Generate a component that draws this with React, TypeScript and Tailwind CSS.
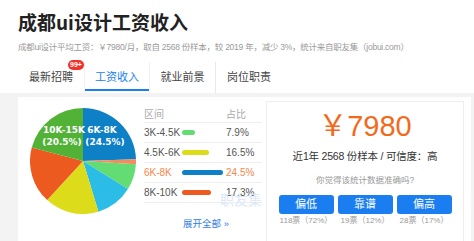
import React from 'react';

const slices = [
  { v: 24.5, c: '#0d80c6' },
  { v: 1.5, c: '#f58a5c' },
  { v: 7.9, c: '#63dc74' },
  { v: 11.4, c: '#2bbde6' },
  { v: 16.5, c: '#dcdc1a' },
  { v: 17.3, c: '#ec5a1f' },
  { v: 20.9, c: '#52b236' },
];

const rows = [
  { range: '3K-4.5K', pct: '7.9%', w: 13, c: 'bg-[#63dc74]', hot: false },
  { range: '4.5K-6K', pct: '16.5%', w: 27, c: 'bg-[#dcdc1a]', hot: false },
  { range: '6K-8K', pct: '24.5%', w: 41, c: 'bg-[#0d80c6]', hot: true },
  { range: '8K-10K', pct: '17.3%', w: 29, c: 'bg-[#ec5a1f]', hot: false },
];

const votes = [
  { label: '偏低', count: '118票（72%）' },
  { label: '靠谱', count: '19票（12%）' },
  { label: '偏高', count: '28票（17%）' },
];

const tabs = ['最新招聘', '工资收入', '就业前景', '岗位职责'];

const Pie: React.FC = () => {
  const cx = 53;
  const cy = 53;
  const r = 53;
  let acc = 0;
  const pt = (p: number) => {
    const a = (p / 100) * Math.PI * 2;
    return [cx + r * Math.sin(a), cy - r * Math.cos(a)];
  };
  return (
    <svg width="106" height="106" viewBox="0 0 106 106" className="shrink-0">
      {slices.map((s, i) => {
        const [x1, y1] = pt(acc);
        acc += s.v;
        const [x2, y2] = pt(acc);
        const large = s.v > 50 ? 1 : 0;
        return (
          <path
            key={i}
            d={`M${cx} ${cy} L${x1} ${y1} A${r} ${r} 0 ${large} 1 ${x2} ${y2} Z`}
            fill={s.c}
          />
        );
      })}
      <g fill="#fff" fontFamily="'DejaVu Sans', sans-serif" fontWeight="bold" fontSize="9" textAnchor="middle">
        <text x="34" y="25">10K-15K</text>
        <text x="32" y="37">(20.5%)</text>
        <text x="72" y="25">6K-8K</text>
        <text x="75" y="37">(24.5%)</text>
      </g>
    </svg>
  );
};

const App: React.FC = () => {
  return (
    <div className="w-[474px] h-[241px] overflow-hidden bg-white font-['Liberation_Sans','Noto_Sans_CJK_SC',sans-serif]">
      {/* header */}
      <div className="px-[18px] pt-[8px]">
        <h1 className="text-[19px] leading-[28px] font-bold text-[#222] font-['Noto_Sans_CJK_SC',sans-serif]">
          成都ui设计工资收入
        </h1>
        <p className="mt-[4px] text-[8.5px] leading-[14px] tracking-[-0.25px] text-[#9a9a9a] whitespace-nowrap">
          成都ui设计平均工资：￥7980/月，取自 2568 份样本，较 2019 年，减少 3%，统计来自职友集（jobui.com）
        </p>
      </div>

      {/* tabs */}
      <div className="mt-[8px] flex h-[31px] pl-[18px]">
        {tabs.map((t, i) => (
          <div
            key={t}
            className={`relative w-[66px] flex items-center justify-center text-[11px] ${
              i === 1 ? 'text-[#1a7ef0] border-x border-[#f0f0f0]' : 'text-[#444]'
            } ${i === 2 ? 'border-r border-[#e8e8e8]' : ''}`}
          >
            {t}
            {i === 0 && (
              <span className="absolute left-[50px] top-[-2px] h-[10px] px-[2px] rounded-full bg-[#f2322a] text-white text-[7px] leading-[10px] font-bold">
                99+
              </span>
            )}
            {i === 1 && <span className="absolute left-0 right-0 bottom-[2px] h-[2px] bg-[#1a7ef0]" />}
          </div>
        ))}
      </div>

      {/* content */}
      <div className="bg-[#f3f3f3] pt-[4px] pl-[18px] pr-[3px] h-[200px]">
        <div className="bg-white h-full flex">
          {/* left */}
          <div className="w-[248px] flex pt-[11px] pl-[12px]">
            <Pie />
            <div className="ml-[8px] w-[118px] text-[10px] text-[#555] relative">
              <div className="h-[15px] flex items-center text-[#aaa] border-b border-[#eee] pb-[1px]">
                <span className="w-[82px]">区间</span>
                <span>占比</span>
              </div>
              {rows.map((r) => (
                <div key={r.range} className="h-[20px] flex items-center border-b border-[#eee]">
                  <span className={`w-[38px] ${r.hot ? 'text-[#f5874a]' : ''}`}>{r.range}</span>
                  <span className="w-[44px] flex items-center">
                    <span className={`h-[5px] rounded-full ${r.c}`} style={{ width: r.w }} />
                  </span>
                  <span className={r.hot ? 'text-[#f5874a]' : ''}>{r.pct}</span>
                </div>
              ))}
              <span className="absolute left-[76px] top-[81px] text-[14px] text-[#dde8f7] font-['Noto_Sans_CJK_SC',serif]">
                职友集
              </span>
              <div className="mt-[14px] pl-[39px] text-[9.5px] text-[#2f7de1]">展开全部 »</div>
            </div>
          </div>

          {/* right */}
          <div className="mt-[4px] w-[198px] border-l border-t border-r border-[#eee] flex flex-col items-center">
            <div className="mt-[7px] text-[29px] leading-[34px] text-[#f26a1b]">
              ￥7980
            </div>
            <div className="mt-[5px] text-[10.5px] leading-[16px] tracking-[-0.2px] text-[#333]">
              近1年 2568 份样本 / 可信度：高
            </div>
            <div className="mt-[10px] text-[8.5px] leading-[12px] text-[#999]">你觉得该统计数据准确吗?</div>
            <div className="mt-[9px] flex gap-[4px]">
              {votes.map((v) => (
                <div key={v.label} className="flex flex-col items-center">
                  <div className="w-[55px] h-[19px] rounded-[3px] bg-[#1a7ef0] text-white text-[11px] flex items-center justify-center">
                    {v.label}
                  </div>
                  <div className="mt-[1px] text-[8px] leading-[12px] text-[#999] whitespace-nowrap">{v.count}</div>
                </div>
              ))}
            </div>
          </div>
        </div>
      </div>
    </div>
  );
};

export default App;
